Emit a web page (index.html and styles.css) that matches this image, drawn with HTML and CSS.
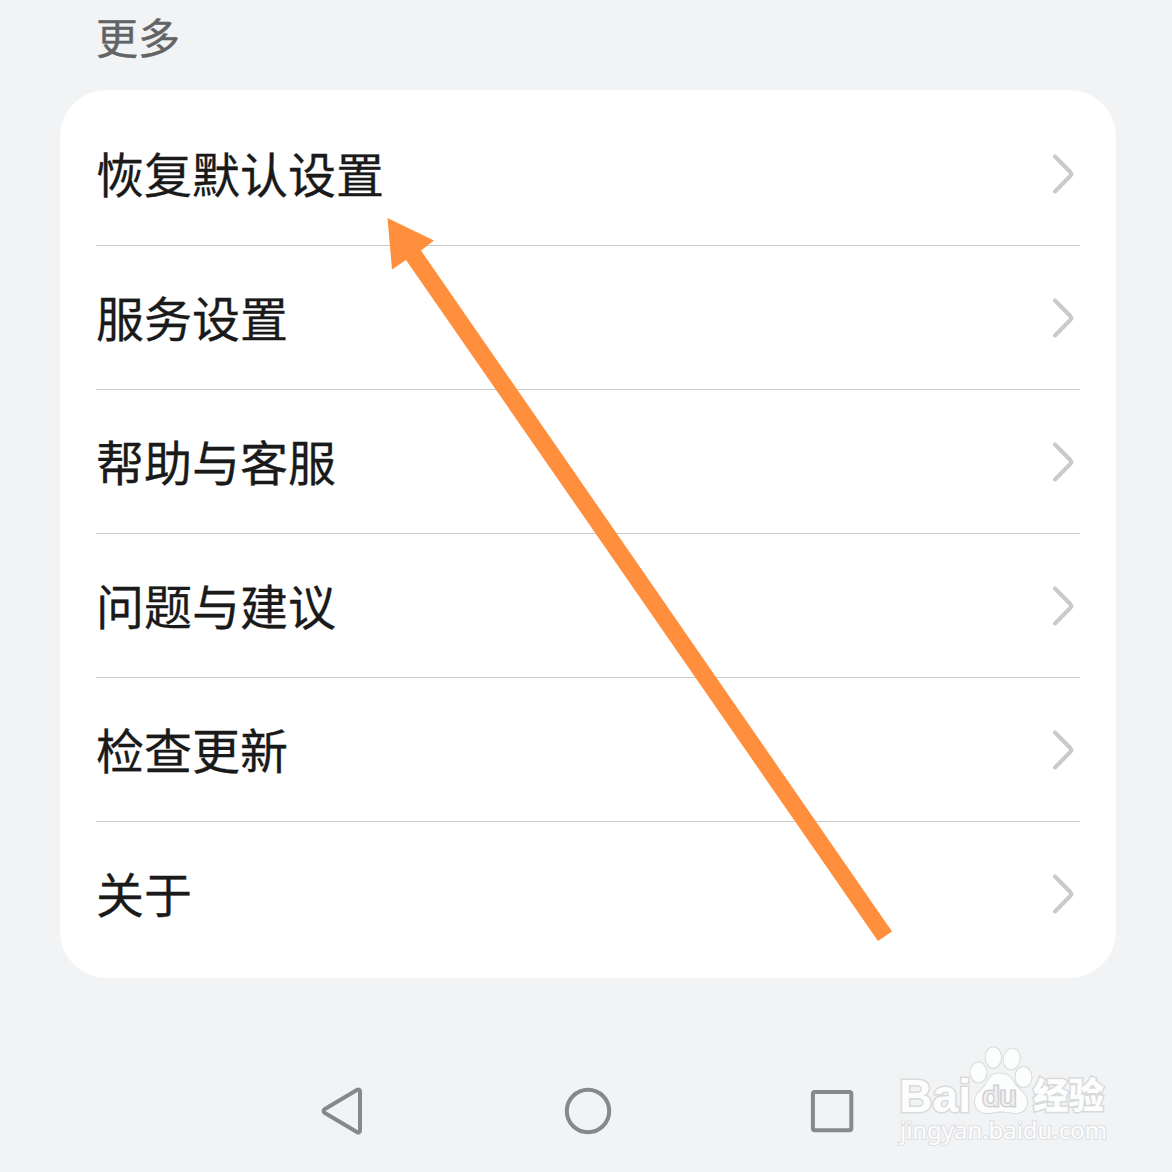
FILE: index.html
```html
<!DOCTYPE html>
<html lang="zh-CN">
<head>
<meta charset="utf-8">
<title>设置</title>
<link rel="stylesheet" href="styles.css">
</head>
<body>
<main class="screen">
  <h2 class="section-title">更多</h2>
  <ul class="card">
    <li class="row"><span class="label">恢复默认设置</span><svg class="chevron" viewBox="0 0 24 44"><path d="M5 4.500 20.500 20.300Q22 22 20.500 23.700L5 39.500"/></svg></li>
    <li class="row"><span class="label">服务设置</span><svg class="chevron" viewBox="0 0 24 44"><path d="M5 4.500 20.500 20.300Q22 22 20.500 23.700L5 39.500"/></svg></li>
    <li class="row"><span class="label">帮助与客服</span><svg class="chevron" viewBox="0 0 24 44"><path d="M5 4.500 20.500 20.300Q22 22 20.500 23.700L5 39.500"/></svg></li>
    <li class="row"><span class="label">问题与建议</span><svg class="chevron" viewBox="0 0 24 44"><path d="M5 4.500 20.500 20.300Q22 22 20.500 23.700L5 39.500"/></svg></li>
    <li class="row"><span class="label">检查更新</span><svg class="chevron" viewBox="0 0 24 44"><path d="M5 4.500 20.500 20.300Q22 22 20.500 23.700L5 39.500"/></svg></li>
    <li class="row"><span class="label">关于</span><svg class="chevron" viewBox="0 0 24 44"><path d="M5 4.500 20.500 20.300Q22 22 20.500 23.700L5 39.500"/></svg></li>
  </ul>
  <nav class="navbar">
    <svg class="nav-icon" viewBox="0 0 48 48"><path d="M40 4.200a1.800 1.800 0 0 0-2.700-1.500L4.500 22.300a2 2 0 0 0 0 3.400L37.300 45.200a1.800 1.800 0 0 0 2.700-1.500Z"/></svg>
    <svg class="nav-icon" viewBox="0 0 48 48"><circle cx="24" cy="24" r="21.200"/></svg>
    <svg class="nav-icon" viewBox="0 0 48 48"><rect x="4.900" y="4.900" width="38.400" height="38.400" rx="2"/></svg>
  </nav>
  <svg class="arrow" viewBox="380 210 520 740"><path d="M387.500 218 434 240.500 421 250.500 892 931.500 878 941 406 260 392 269.500Z"/></svg>
  <svg class="watermark" viewBox="880 1030 250 130">
    <text class="brand" x="899" y="1111.500" font-size="47" textLength="72" lengthAdjust="spacingAndGlyphs">Bai</text>
    <g class="paw">
      <ellipse cx="978.500" cy="1072.500" rx="8" ry="10"/>
      <ellipse cx="993.300" cy="1057.500" rx="7.700" ry="10.300"/>
      <ellipse cx="1011.700" cy="1059" rx="8" ry="10.300" transform="rotate(10 1011.700 1059)"/>
      <ellipse cx="1023.500" cy="1077" rx="8" ry="10"/>
      <path d="M1000 1073.500C1007 1073.500 1011 1077 1014 1083C1018 1090 1027 1093 1027 1102C1027 1110 1021 1113.500 1014 1113C1008 1112 1004 1111.500 1000 1111.500C996 1111.500 992 1113.500 986 1113C979 1112.500 975 1108 975 1101C975 1092 984 1090 987 1082C990 1076 994 1073.500 1000 1073.500Z"/>
    </g>
    <text class="du" x="982.500" y="1106" font-size="28" textLength="34" lengthAdjust="spacingAndGlyphs">du</text>
    <text class="brand-cn" x="1033" y="1109" font-size="36" textLength="71" lengthAdjust="spacingAndGlyphs">经验</text>
    <text class="site" x="900" y="1139" font-size="24" textLength="207" lengthAdjust="spacingAndGlyphs">jingyan.baidu.com</text>
  </svg>
</main>
</body>
</html>
```
FILE: styles.css
```css
* { box-sizing: border-box; }
body {
  margin: 0;
  background: #f2f3f5;
  font-family: "Noto Sans CJK SC", sans-serif;
}
.screen {
  position: relative;
  height: 1172px;
  overflow: hidden;
  padding: 6px 56px 0 60px;
}
.section-title {
  margin: 0;
  padding-left: 36px;
  height: 84px;
  font-size: 42px;
  font-weight: 400;
  line-height: 60px;
  color: #626365;
  -webkit-text-stroke: 0.4px #626365;
}
.card {
  margin: 0;
  padding: 12px 36px;
  list-style: none;
  background: #fff;
  border-radius: 47px;
}
.row {
  display: flex;
  align-items: center;
  justify-content: space-between;
  height: 144px;
  padding-right: 6px;
  border-bottom: 1px solid #c9cccd;
}
.row:last-child { border-bottom-color: transparent; }
.label {
  padding-bottom: 3px;
  font-size: 48px;
  line-height: 70px;
  color: #1a1a1a;
  -webkit-text-stroke: 0.3px #1a1a1a;
}
.chevron {
  width: 24px;
  height: 44px;
  fill: none;
  stroke: #cbcbcb;
  stroke-width: 4.2;
  stroke-linecap: round;
}
.navbar {
  display: flex;
  justify-content: space-between;
  margin-top: 109px;
  padding: 0 260px;
}
.nav-icon {
  width: 48px;
  height: 48px;
  fill: none;
  stroke: #87888a;
  stroke-width: 4;
}
.arrow {
  position: absolute;
  left: 380px;
  top: 210px;
  width: 520px;
  height: 740px;
  fill: #ff8f3c;
}
.watermark {
  position: absolute;
  left: 880px;
  top: 1030px;
  width: 250px;
  height: 130px;
  fill: #fcfdfd;
  stroke: #d9dadb;
  stroke-width: 2;
  paint-order: stroke;
}
.brand, .du { font-family: "Liberation Sans", sans-serif; }
.brand { font-weight: 700; }
.brand, .brand-cn { stroke-width: 3; }
.brand-cn { font-weight: 900; }
.du {
  fill: #eeeff0;
  stroke: #d0d1d2;
  stroke-width: 3;
}
.site {
  font-family: "Noto Sans", sans-serif;
  stroke: #dfe0e2;
  stroke-width: 2.2;
}
```
